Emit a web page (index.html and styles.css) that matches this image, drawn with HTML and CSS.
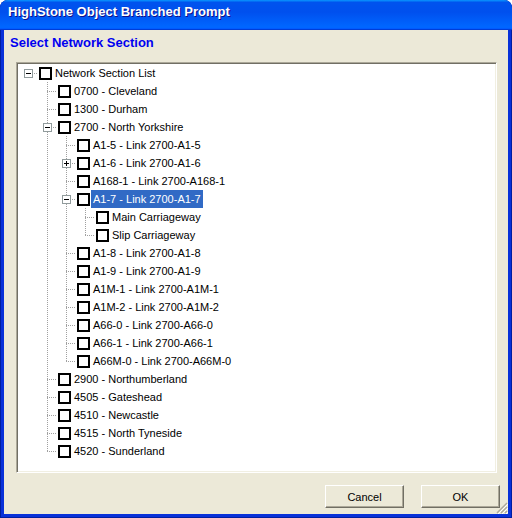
FILE: index.html
```html
<!DOCTYPE html>
<html lang="en">
<head>
    <meta charset="UTF-8">
    <meta name="viewport" content="width=device-width, initial-scale=1.0">
    <title>HighStone Object Branched Prompt</title>
    <link rel="stylesheet" href="styles.css">
</head>
<body>
    <div class="window">
        <div class="titlebar">HighStone Object Branched Prompt</div>
        <div class="client">
            <div class="heading">Select Network Section</div>
            <div id="tree" class="tree"></div>
            <div class="footer">
                <button class="btn">Cancel</button>
                <button class="btn">OK</button>
            </div>
            <svg class="grip" width="12" height="12" viewBox="0 0 12 12">
                <path d="M11 1L1 11M11 5L5 11M11 9L9 11" stroke="#aca899" stroke-width="1.4"/>
                <path d="M12 2L2 12M12 6L6 12M12 10L10 12" stroke="#fff" stroke-width="1"/>
            </svg>
        </div>
    </div>

    <script>
        const sections = [
            { text: "Network Section List", open: true, children: [
                { text: "0700 - Cleveland" },
                { text: "1300 - Durham" },
                { text: "2700 - North Yorkshire", open: true, children: [
                    { text: "A1-5 - Link 2700-A1-5" },
                    { text: "A1-6 - Link 2700-A1-6", children: [{ text: "..." }] },
                    { text: "A168-1 - Link 2700-A168-1" },
                    { text: "A1-7 - Link 2700-A1-7", open: true, selected: true, children: [
                        { text: "Main Carriageway" },
                        { text: "Slip Carriageway" }
                    ]},
                    { text: "A1-8 - Link 2700-A1-8" },
                    { text: "A1-9 - Link 2700-A1-9" },
                    { text: "A1M-1 - Link 2700-A1M-1" },
                    { text: "A1M-2 - Link 2700-A1M-2" },
                    { text: "A66-0 - Link 2700-A66-0" },
                    { text: "A66-1 - Link 2700-A66-1" },
                    { text: "A66M-0 - Link 2700-A66M-0" }
                ]},
                { text: "2900 - Northumberland" },
                { text: "4505 - Gateshead" },
                { text: "4510 - Newcastle" },
                { text: "4515 - North Tyneside" },
                { text: "4520 - Sunderland" }
            ]}
        ];

        function el(tag, className, text) {
            let node = document.createElement(tag);
            if (className) node.className = className;
            if (text) node.textContent = text;
            return node;
        }

        function render(nodes, parent, guides) {
            nodes.forEach((node, i) => {
                let last = i == nodes.length - 1;
                let row = el("div", "row");

                guides.forEach(more => row.appendChild(el("span", "guide " + (more ? "pipe" : "blank"))));

                let kind = guides.length == 0 ? "root" : (last ? "elbow" : "tee");
                let cell = el("span", "guide " + kind);
                if (node.children) cell.appendChild(el("span", "toggle" + (node.open ? "" : " closed")));
                row.appendChild(cell);

                row.appendChild(el("span", "check"));
                row.appendChild(el("span", "label" + (node.selected ? " selected" : ""), node.text));
                parent.appendChild(row);

                if (node.children && node.open) render(node.children, parent, guides.concat(!last));
            });
        }

        render(sections, document.getElementById("tree"), []);
    </script>
</body>
</html>
```

FILE: styles.css
```css
:root {
    --face: #ece9d8;
    --dots: #a0a0a0;
    --vdots: repeating-linear-gradient(to bottom, var(--dots) 0 1px, transparent 1px 2px);
    --hdots: repeating-linear-gradient(to right, var(--dots) 0 1px, transparent 1px 2px);
}
* {
    box-sizing: border-box;
}
html, body {
    margin: 0;
    padding: 0;
    background: #fff;
}

.window {
    display: flex;
    flex-direction: column;
    width: 512px;
    height: 518px;
    background: #0831d9;
    border-radius: 8px 8px 0 0;
    box-shadow: inset 1px 0 #001ea0, inset -1px 0 #001ea0, inset 0 -1px #001ea0;
    overflow: hidden;
}
.titlebar {
    height: 30px;
    padding: 4px 0 0 8px;
    line-height: 26px;
    font: bold 13px "Liberation Sans", Arial, sans-serif;
    color: #fff;
    text-shadow: 1px 1px #0f1089;
    background: linear-gradient(180deg, #0997ff, #0053ee 8%, #0050ee 40%, #06f 88%, #06f 93%, #005bff 95%, #003dd7 96%, #003dd7);
}
.client {
    position: relative;
    flex: 1;
    display: flex;
    flex-direction: column;
    margin: 0 4px 4px;
    background: var(--face);
    font: 11px "Liberation Sans", Arial, sans-serif;
}
.heading {
    height: 32px;
    padding: 5px 0 0 6px;
    line-height: 15px;
    font: bold 13px "Liberation Sans", Arial, sans-serif;
    color: #0000f0;
}

.tree {
    height: 411px;
    margin: 0 11px 0 12px;
    padding: 1px 1px 1px 2px;
    background: #fff;
    border: 1px solid;
    border-color: #aca899 #fff #fff #aca899;
    box-shadow: inset 1px 1px #716f64, inset -1px -1px #f1efe2;
    overflow: hidden;
}
.row {
    display: flex;
    height: 18px;
}
.guide {
    flex: none;
    display: flex;
    justify-content: center;
    align-items: flex-start;
    width: 19px;
    height: 18px;
    background-repeat: no-repeat;
}
.guide.pipe {
    background-image: var(--vdots);
    background-position: 9px 0;
    background-size: 1px 18px;
}
.guide.tee {
    background-image: var(--hdots), var(--vdots);
    background-position: 9px 9px, 9px 0;
    background-size: 10px 1px, 1px 18px;
}
.guide.elbow {
    background-image: var(--hdots), var(--vdots);
    background-position: 9px 9px, 9px 0;
    background-size: 10px 1px, 1px 10px;
}
.guide.root {
    background-image: var(--hdots);
    background-position: 9px 9px;
    background-size: 10px 1px;
}
.toggle {
    width: 9px;
    height: 9px;
    margin-top: 5px;
    border: 1px solid #919b9c;
    background: linear-gradient(#000, #000) center / 5px 1px no-repeat, #fff;
}
.toggle.closed {
    background: linear-gradient(#000, #000) center / 5px 1px no-repeat,
                linear-gradient(#000, #000) center / 1px 5px no-repeat, #fff;
}
.check {
    flex: none;
    width: 13px;
    height: 13px;
    margin: 3px 0 0 1px;
    border: 2px solid #000;
    background: #fff;
}
.label {
    margin-left: 1px;
    padding: 0 2px;
    line-height: 18px;
    white-space: nowrap;
    color: #000;
}
.label.selected {
    background: #316ac5;
    color: #fff;
}

.footer {
    display: flex;
    justify-content: flex-end;
    gap: 17px;
    margin-top: 12px;
    padding: 0 8px 6px 0;
}
.btn {
    width: 79px;
    height: 23px;
    padding: 0;
    font: 11px "Liberation Sans", Arial, sans-serif;
    color: #000;
    background: var(--face);
    border: 1px solid;
    border-color: #fff #716f64 #716f64 #fff;
    box-shadow: inset -1px -1px #aca899;
    border-radius: 0;
}
.grip {
    position: absolute;
    right: 0;
    bottom: 0;
}
```
